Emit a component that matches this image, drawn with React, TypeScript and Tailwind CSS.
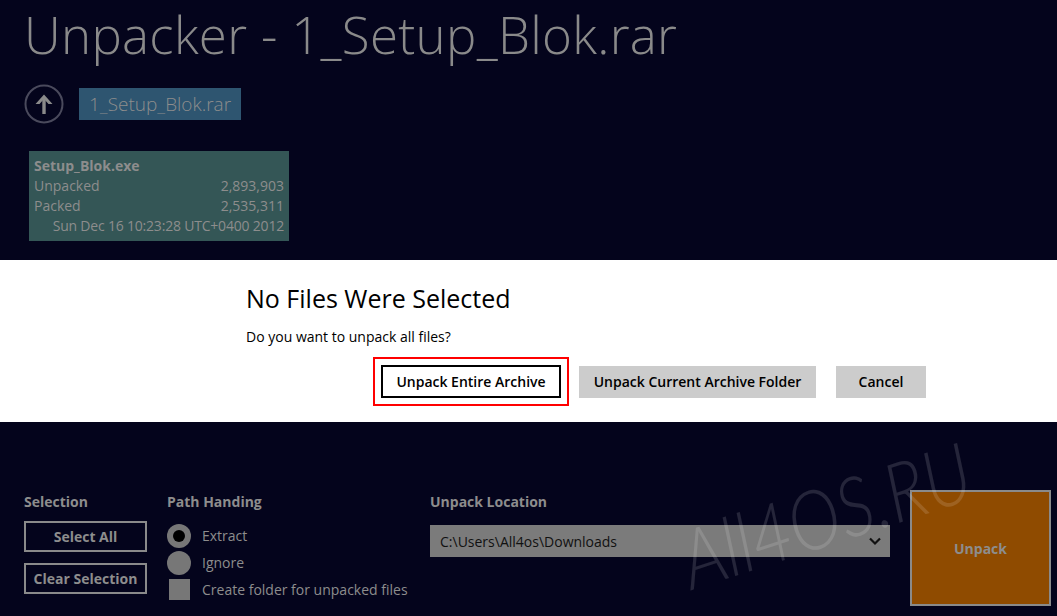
import React from 'react';

const FONT = "font-['Open_Sans','Liberation_Sans',sans-serif]";

const UpArrow = () => (
    <svg width="40" height="40" viewBox="0 0 40 40" className="shrink-0">
        <circle cx="20" cy="20" r="18.5" fill="none" stroke="#4a4a5c" strokeWidth="2" />
        <path d="M20 30 V14" fill="none" stroke="#8a8a8a" strokeWidth="3.4" />
        <path d="M11.5 20 L20 10.5 L28.5 20 L24.5 20 L20 15 L15.5 20 Z" fill="#8a8a8a" />
    </svg>
);

const Chevron = () => (
    <svg width="14" height="10" viewBox="0 0 14 10">
        <path d="M2 2.5 L7 7.5 L12 2.5" fill="none" stroke="#111" strokeWidth="2.2" />
    </svg>
);

const FileTile = () => (
    <div className="w-[260px] h-[90px] bg-[#345656] px-[5px] pt-[5px] text-[14px] leading-[20px] text-[#8d8d8d]">
        <div className="font-bold">Setup_Blok.exe</div>
        <div className="flex justify-between">
            <span>Unpacked</span>
            <span>2,893,903</span>
        </div>
        <div className="flex justify-between">
            <span>Packed</span>
            <span>2,535,311</span>
        </div>
        <div className="text-right tracking-[-0.2px]">Sun Dec 16 10:23:28 UTC+0400 2012</div>
    </div>
);

const OutlineButton = ({ label }: { label: string }) => (
    <button className="w-[123px] h-[31px] border-2 border-[#8a8a8a] text-[14px] font-bold text-[#8d8d8d]">
        {label}
    </button>
);

const Option = ({ kind, label }: { kind: 'on' | 'off' | 'box'; label: string }) => (
    <div className="flex items-center h-[27px] gap-[11px]">
        <div className="w-[24px] flex justify-center">
            {kind === 'box' ? (
                <div className="w-[21px] h-[21px] bg-[#777777]" />
            ) : (
                <div className="w-[24px] h-[24px] rounded-full bg-[#777777] flex items-center justify-center">
                    {kind === 'on' && <div className="w-[12px] h-[12px] rounded-full bg-black" />}
                </div>
            )}
        </div>
        <span className="text-[14px] text-[#8d8d8d]">{label}</span>
    </div>
);

export default function App() {
    return (
        <div className={`relative w-full h-[616px] overflow-hidden bg-[#04041c] ${FONT}`}>
            <div className="h-[260px] pl-[24px] pt-[2px]">
                <h1 className="text-[51px] leading-[64px] font-light text-[#8a8a8a] tracking-[0.3px] whitespace-nowrap">
                    Unpacker - 1_Setup_Blok.rar
                </h1>
                <div className="flex items-center gap-[15px] mt-[18px]">
                    <UpArrow />
                    <div className="h-[32px] px-[10px] bg-[#2e5570] flex items-center text-[19px] font-light text-[#8d8d8d]">
                        1_Setup_Blok.rar
                    </div>
                </div>
                <div className="mt-[27px] ml-[5px]">
                    <FileTile />
                </div>
            </div>

            <div className="h-[162px] bg-white pl-[246px] pt-[21px]">
                <h2 className="text-[25px] leading-[34px] text-black">No Files Were Selected</h2>
                <p className="mt-[12px] text-[14px] leading-[20px] text-black">Do you want to unpack all files?</p>
                <div className="flex items-center mt-[10px] ml-[127px]">
                    <div className="border-2 border-[#ff0000] p-[6px]">
                        <button className="h-[33px] w-[180px] border-2 border-black bg-white text-[14px] font-semibold text-black">
                            Unpack Entire Archive
                        </button>
                    </div>
                    <button className="ml-[10px] h-[32px] w-[237px] bg-[#cccccc] text-[14px] font-semibold text-black">
                        Unpack Current Archive Folder
                    </button>
                    <button className="ml-[20px] h-[32px] w-[90px] bg-[#cccccc] text-[14px] font-semibold text-black">
                        Cancel
                    </button>
                </div>
            </div>

            <div className="flex pl-[24px] pt-[70px]">
                <div className="w-[143px]">
                    <div className="text-[14px] font-bold text-[#8d8d8d] leading-[20px]">Selection</div>
                    <div className="mt-[9px] flex flex-col gap-[11px]">
                        <OutlineButton label="Select All" />
                        <OutlineButton label="Clear Selection" />
                    </div>
                </div>
                <div className="w-[263px]">
                    <div className="text-[14px] font-bold text-[#8d8d8d] leading-[20px]">Path Handing</div>
                    <div className="mt-[10px]">
                        <Option kind="on" label="Extract" />
                        <Option kind="off" label="Ignore" />
                        <Option kind="box" label="Create folder for unpacked files" />
                    </div>
                </div>
                <div className="w-[480px]">
                    <div className="text-[14px] font-bold text-[#8d8d8d] leading-[20px]">Unpack Location</div>
                    <div className="mt-[13px] h-[32px] w-[460px] bg-[#7b7b7b] flex items-center justify-between pl-[10px] pr-[8px]">
                        <span className="text-[14px] text-[#111111]">C:\Users\All4os\Downloads</span>
                        <Chevron />
                    </div>
                </div>
                <div className="-mt-[2px]">
                    <button className="w-[141px] h-[116px] bg-[#8f4b00] border-2 border-[#8a8a8a] text-[14px] font-bold text-[#8d8d8d]">
                        Unpack
                    </button>
                </div>
            </div>

            <div className="absolute left-[692px] top-[517px] -rotate-[18deg] scale-x-[0.85] origin-[0_73px] pointer-events-none text-[82px] leading-none italic font-light text-white/[0.13] font-['Lato','Liberation_Sans',sans-serif] whitespace-nowrap">
                All4OS.RU
            </div>
        </div>
    );
}
